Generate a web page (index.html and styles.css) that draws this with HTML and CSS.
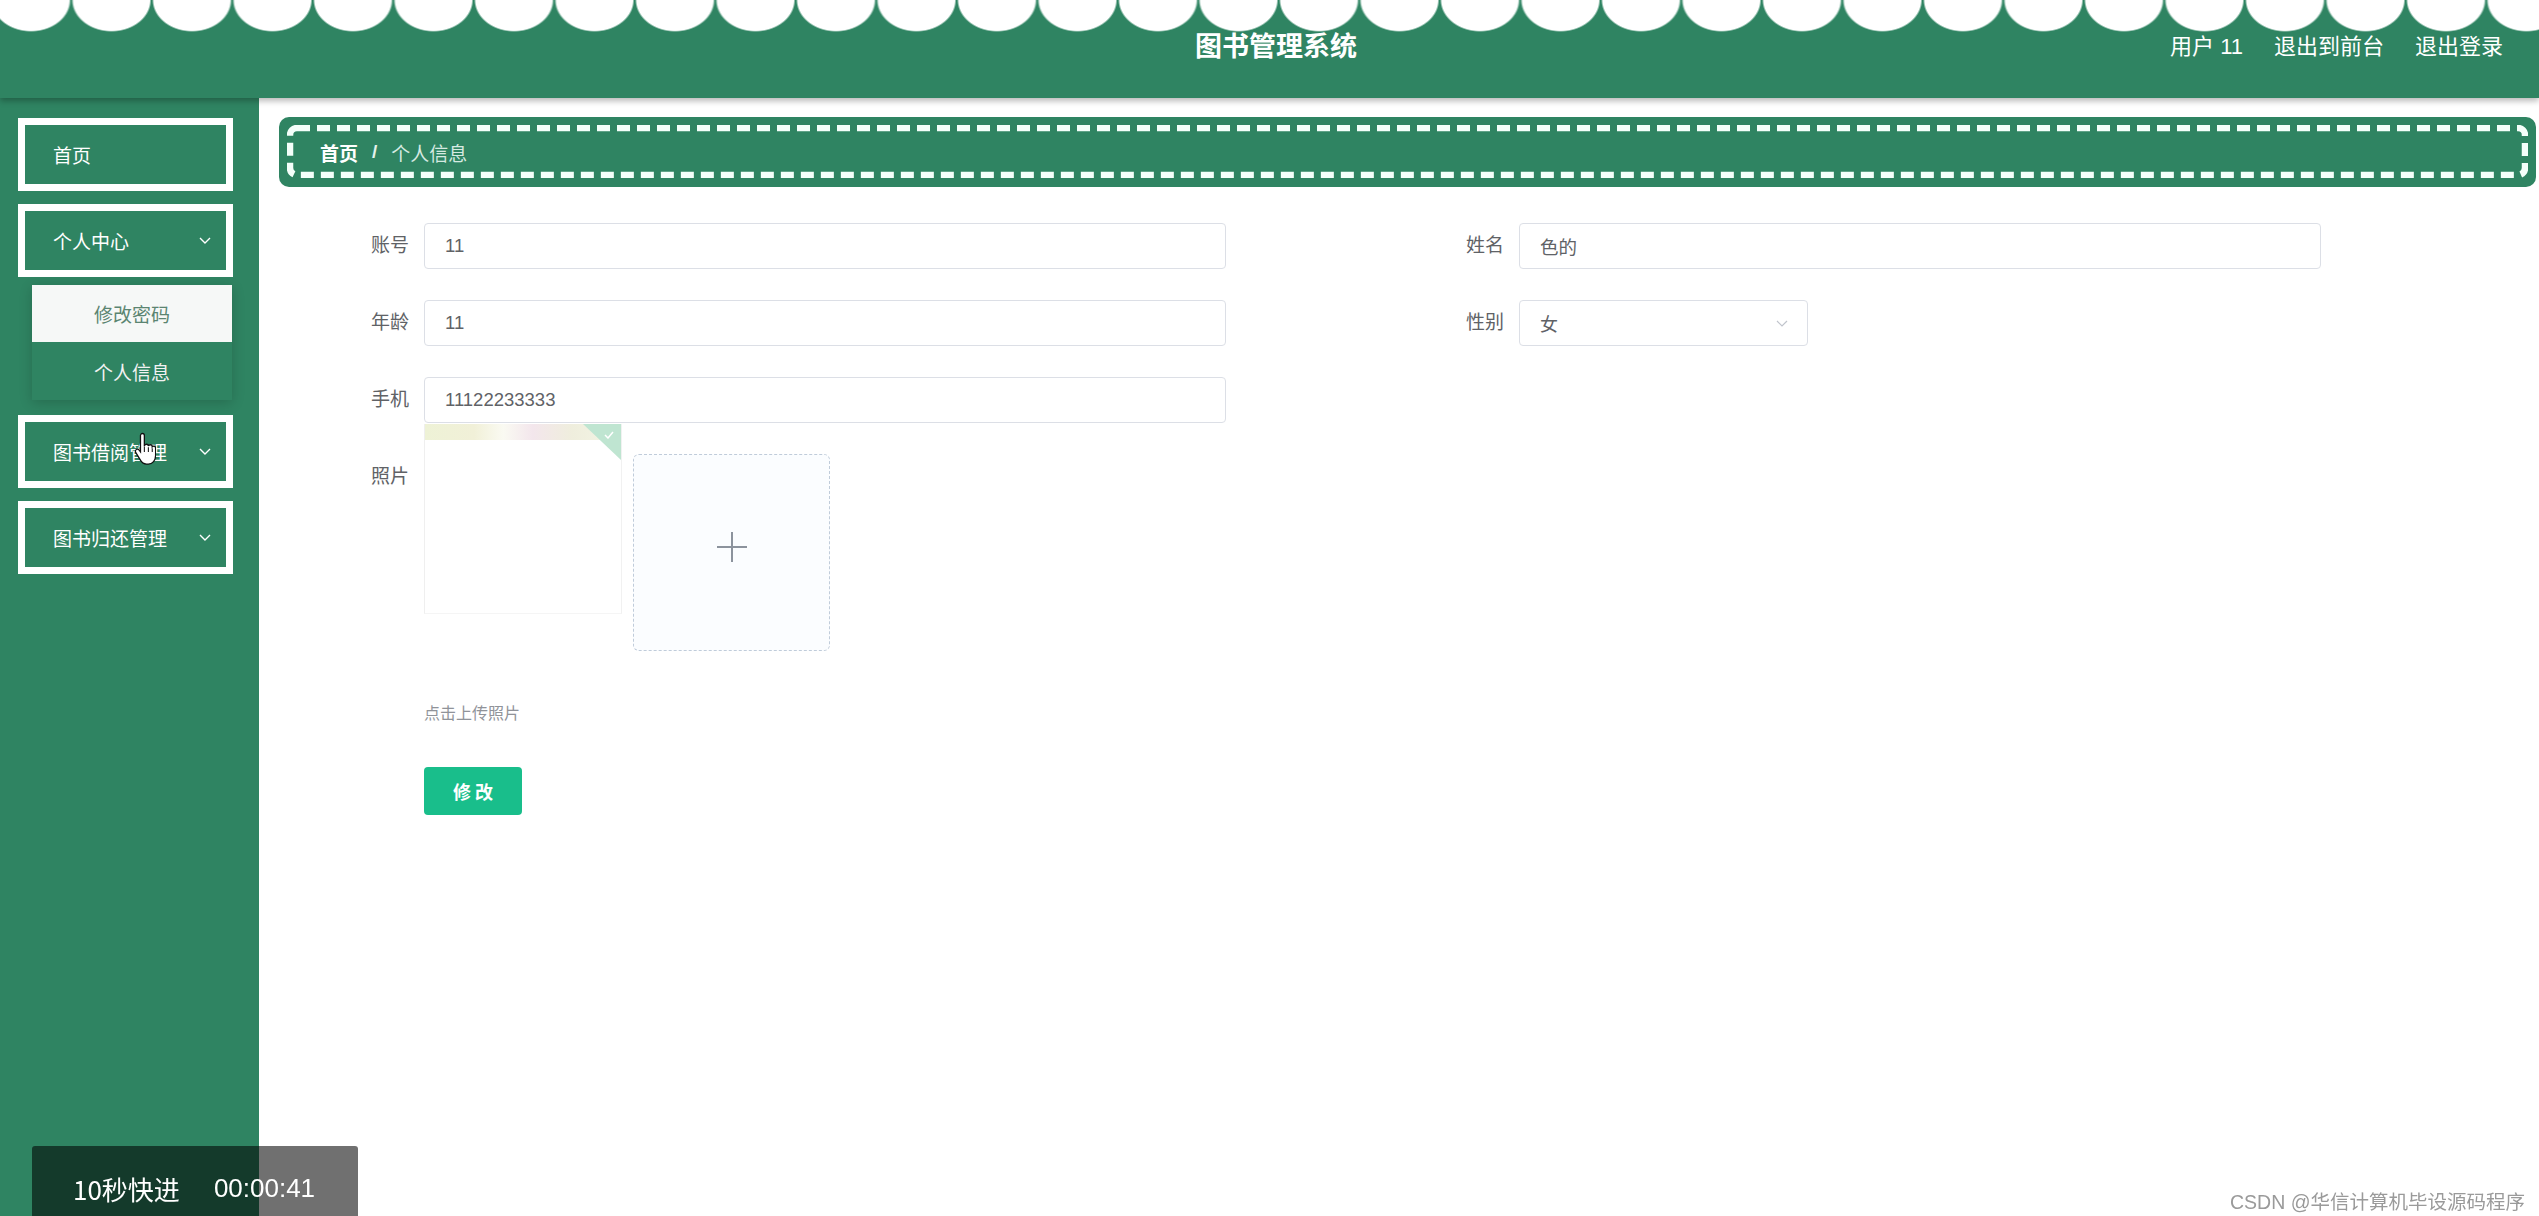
FILE: index.html
```html
<!DOCTYPE html>
<html lang="zh-CN">
<head>
  <meta charset="UTF-8">
  <title>图书管理系统</title>
  <link rel="stylesheet" href="styles.css">
</head>
<body>
  <div class="topbar">
    <div></div>
    <h1 class="title">图书管理系统</h1>
    <div class="top-links">
      <span>用户 11</span>
      <span>退出到前台</span>
      <span>退出登录</span>
    </div>
  </div>

  <div class="layout">
    <aside class="sidebar">
      <div class="menu-box first">
        <span>首页</span>
      </div>
      <div class="menu-box">
        <span>个人中心</span>
        <svg class="chevron" viewBox="0 0 12 7" width="12" height="7"><path d="M1 1l5 5 5-5" fill="none" stroke="#fff" stroke-width="1.4"/></svg>
      </div>
      <div class="submenu">
        <div class="submenu-item light">修改密码</div>
        <div class="submenu-item active">个人信息</div>
      </div>
      <div class="menu-box">
        <span>图书借阅管理</span>
        <svg class="chevron" viewBox="0 0 12 7" width="12" height="7"><path d="M1 1l5 5 5-5" fill="none" stroke="#fff" stroke-width="1.4"/></svg>
      </div>
      <div class="menu-box">
        <span>图书归还管理</span>
        <svg class="chevron" viewBox="0 0 12 7" width="12" height="7"><path d="M1 1l5 5 5-5" fill="none" stroke="#fff" stroke-width="1.4"/></svg>
      </div>

      <!-- mouse pointer from the recording -->
      <svg class="cursor" viewBox="0 0 17 24" width="22" height="33">
        <path d="M5 2c0-.9.7-1.6 1.5-1.6S8 1.1 8 2v8.2c.1-.9.8-1.5 1.6-1.5.8 0 1.5.6 1.5 1.4.2-.6.8-1 1.5-1 .9 0 1.5.7 1.5 1.6.3-.3.7-.5 1.1-.5.9 0 1.5.7 1.5 1.6v5.7c0 3.7-2.4 6.5-5.6 6.5H9.6c-1.9 0-3.4-.9-4.4-2.6L1.3 15c-.5-.8-.2-1.8.6-2.2.7-.4 1.6-.2 2.1.5L5 14.6V2z" fill="#fff" stroke="#111" stroke-width="1"/>
        <path d="M8 10.5v4.2M11.1 11v3.7M14.1 11.8v3" stroke="#111" stroke-width=".8"/>
      </svg>
    </aside>

    <main class="main">
      <div class="breadcrumb">
        <svg class="dash-frame"><rect rx="7" ry="7"/></svg>
        <span class="crumb-home">首页</span>
        <span class="crumb-sep">/</span>
        <span class="crumb-current">个人信息</span>
      </div>

      <form class="profile-form">
        <div class="form-grid">
          <div class="form-item">
            <label>账号</label>
            <input class="text-input" type="text" value="11">
          </div>
          <div class="form-item">
            <label>姓名</label>
            <input class="text-input" type="text" value="色的">
          </div>
          <div class="form-item">
            <label>年龄</label>
            <input class="text-input" type="text" value="11">
          </div>
          <div class="form-item">
            <label>性别</label>
            <div class="select-box">
              <span>女</span>
              <svg viewBox="0 0 12 7" width="12" height="7"><path d="M1 1l5 5 5-5" fill="none" stroke="#c0c4cc" stroke-width="1.2"/></svg>
            </div>
          </div>
          <div class="form-item">
            <label>手机</label>
            <input class="text-input" type="text" value="11122233333">
          </div>
        </div>

        <div class="form-item photo-item">
          <label>照片</label>
          <div class="uploads">
            <div class="photo-card">
              <div class="photo-strip"></div>
              <div class="status-corner">
                <svg viewBox="0 0 10 8" width="10" height="8"><path d="M1 4l3 3 5-6" fill="none" stroke="#fff" stroke-width="1.5"/></svg>
              </div>
            </div>
            <div class="upload-box">
              <svg viewBox="0 0 32 32" width="32" height="32"><path d="M16 1v30M1 16h30" stroke="#8c939d" stroke-width="2"/></svg>
            </div>
          </div>
        </div>

        <div class="upload-tip">点击上传照片</div>
        <button type="button" class="btn-submit">修 改</button>
      </form>
    </main>
  </div>

  <div class="video-bar">
    <span>10秒快进</span>
    <span class="time">00:00:41</span>
  </div>
  <div class="watermark">CSDN @华信计算机毕设源码程序</div>
</body>
</html>
```

FILE: styles.css
```css
body {
  margin: 0;
  font-family: "Liberation Sans", "Noto Sans CJK SC", sans-serif;
  background: #fff;
  height: 100vh;
  overflow: hidden;
}

.topbar {
  height: 98px;
  display: grid;
  grid-template-columns: 1fr auto 1fr;
  align-items: start;
  padding-top: 32px;
  box-sizing: border-box;
  background: radial-gradient(ellipse 40px 32px at 40px 0, #fff 95%, rgba(255, 255, 255, 0) 100%) -9px 0 / 80.5px 33px repeat-x, #2f8462;
  color: #fff;
  position: relative;
  z-index: 2;
  box-shadow: 0 3px 6px rgba(0, 0, 0, 0.28);
}

.title {
  margin: 0;
  padding-left: 13px;
  font-size: 27px;
  line-height: 30px;
  font-weight: bold;
}

.top-links {
  display: flex;
  justify-content: flex-end;
  gap: 31px;
  padding-right: 36px;
  font-size: 22px;
  line-height: 30px;
}

.layout {
  display: flex;
  height: calc(100vh - 98px);
}

.sidebar {
  width: 259px;
  flex: none;
  background: #2f8462;
  padding-top: 20px;
  position: relative;
}

.menu-box {
  margin: 0 0 13px 18px;
  width: 215px;
  height: 73px;
  box-sizing: border-box;
  border: 7px solid #fff;
  display: flex;
  align-items: center;
  justify-content: space-between;
  padding: 0 15px 0 28px;
  color: #fff;
  font-size: 19px;
}

.menu-box + .submenu {
  margin-top: -5px;
}

.submenu {
  margin: 0 0 15px 32px;
  width: 200px;
  box-shadow: 0 3px 12px rgba(0, 0, 0, 0.18);
  font-size: 19px;
}

.submenu-item {
  height: 57px;
  display: flex;
  align-items: center;
  justify-content: center;
}

.submenu-item.light {
  background: #f6f8f7;
  color: #5b8571;
}

.submenu-item.active {
  height: 58px;
  background: #2f8462;
  color: #f2f2f2;
}

.cursor {
  position: absolute;
  left: 134px;
  top: 334px;
}

.main {
  flex: 1;
  background: #fff;
  overflow: hidden;
}

.breadcrumb {
  margin: 19px 3px 0 20px;
  height: 70px;
  border-radius: 10px;
  background: #2f8462;
  position: relative;
  display: flex;
  align-items: center;
  padding-left: 41px;
  font-size: 19px;
}

.dash-frame {
  position: absolute;
  left: 8px;
  top: 8px;
  width: calc(100% - 16px);
  height: calc(100% - 17px);
}

.dash-frame rect {
  x: 3px;
  y: 3px;
  width: calc(100% - 6px);
  height: calc(100% - 6px);
  fill: none;
  stroke: #f4fffa;
  stroke-width: 6.5;
  stroke-dasharray: 13 7;
}

.crumb-home {
  color: #fff;
  font-weight: bold;
}

.crumb-sep {
  color: #e4f2ec;
  font-weight: bold;
  margin: 0 14px;
}

.crumb-current {
  color: #d6eae1;
}

.profile-form {
  margin-top: 36px;
  padding-left: 70px;
}

.form-grid {
  display: grid;
  grid-template-columns: 1095px 1095px;
  row-gap: 31px;
}

.form-item {
  display: flex;
  align-items: flex-start;
}

.form-item label {
  width: 80px;
  margin-right: 15px;
  text-align: right;
  line-height: 46px;
  font-size: 19px;
  color: #606266;
}

.text-input {
  width: 802px;
  height: 46px;
  box-sizing: border-box;
  border: 1px solid #dcdfe6;
  border-radius: 4px;
  padding: 0 20px;
  font-family: "Liberation Sans", "Noto Sans CJK SC", sans-serif;
  font-size: 18.5px;
  color: #606266;
  outline: none;
}

.select-box {
  width: 289px;
  height: 46px;
  box-sizing: border-box;
  border: 1px solid #dcdfe6;
  border-radius: 4px;
  padding: 0 19px 0 20px;
  display: flex;
  align-items: center;
  justify-content: space-between;
  font-size: 18px;
  color: #606266;
}

.photo-item {
  margin-top: 31px;
}

.uploads {
  display: flex;
  align-items: flex-start;
}

.photo-card {
  width: 198px;
  height: 190px;
  margin-top: -30px;
  box-sizing: border-box;
  border-left: 1px solid #efefef;
  border-right: 1px solid #f1f1f1;
  border-bottom: 1px solid #f5f5f5;
  background: #fff;
  position: relative;
  overflow: hidden;
}

.photo-strip {
  height: 16px;
  background: linear-gradient(to right, #eef2d6 0%, #f1f0d8 25%, #fafaf2 40%, #f3e6ec 55%, #efeedd 75%, #f4f5e6 100%);
}

.status-corner {
  position: absolute;
  top: 0;
  right: 0;
  width: 38px;
  height: 36px;
  background: #bfe5d1;
  clip-path: polygon(0 0, 100% 0, 100% 100%);
}

.status-corner svg {
  position: absolute;
  right: 7px;
  top: 7px;
}

.upload-box {
  width: 197px;
  height: 197px;
  margin-left: 11px;
  box-sizing: border-box;
  padding-bottom: 12px;
  border: 1px dashed #c0ccda;
  border-radius: 6px;
  background: #fbfdff;
  display: flex;
  align-items: center;
  justify-content: center;
}

.upload-tip {
  margin: 52px 0 0 95px;
  font-size: 16px;
  line-height: 22px;
  color: #909399;
}

.btn-submit {
  margin: 42px 0 0 95px;
  width: 98px;
  height: 48px;
  border: none;
  border-radius: 4px;
  background: #19be8b;
  color: #fff;
  font-family: "Noto Sans CJK SC", sans-serif;
  font-size: 18px;
  font-weight: bold;
  cursor: pointer;
}

.video-bar {
  position: fixed;
  left: 32px;
  bottom: 0;
  width: 326px;
  height: 70px;
  box-sizing: border-box;
  padding: 14px 0 0 41px;
  border-radius: 3px 3px 0 0;
  background: rgba(0, 0, 0, 0.56);
  color: #fff;
  font-family: "Noto Sans CJK SC", sans-serif;
  font-size: 26px;
  display: flex;
  align-items: center;
  gap: 34px;
}

.video-bar .time {
  font-family: "Liberation Sans", sans-serif;
  font-size: 26px;
}

.watermark {
  position: fixed;
  right: 14px;
  bottom: 2px;
  font-size: 19.5px;
  line-height: 24px;
  color: #9a9a9a;
  text-shadow: 0 0 2px #fff;
}
```
